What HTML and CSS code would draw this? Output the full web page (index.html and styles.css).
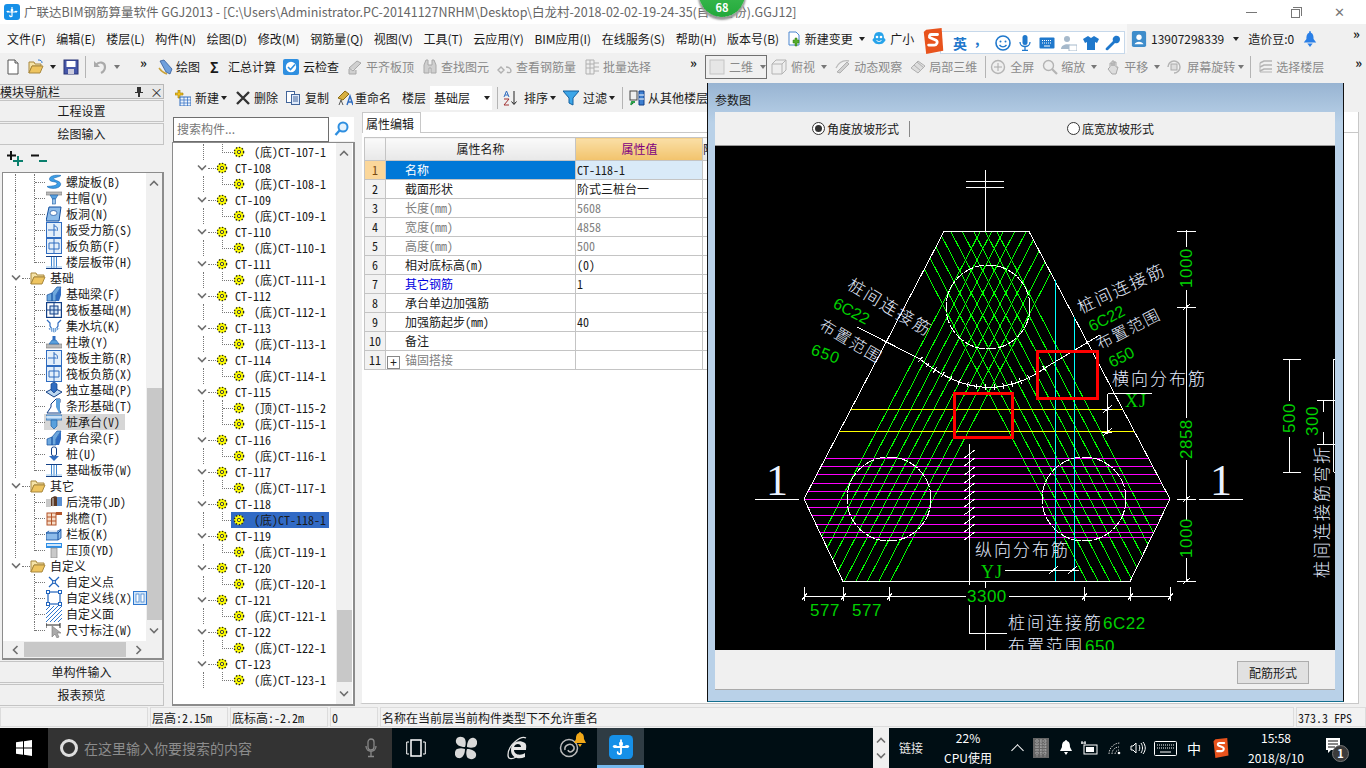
FILE: index.html
```html
<!DOCTYPE html>
<html lang="zh-CN">
<head>
<meta charset="utf-8">
<title>广联达BIM钢筋算量软件 GGJ2013</title>
<link rel="stylesheet" href="styles.css">
</head>
<body>
<svg class="defs" width="0" height="0">
<defs>
<symbol id="arr" viewBox="0 0 8 4"><path d="M1 0h6L4 4z" fill="#222"/></symbol>
<symbol id="arrg" viewBox="0 0 8 4"><path d="M1 0h6L4 4z" fill="#777"/></symbol>
<symbol id="chev" viewBox="0 0 10 8"><path d="M1 1.5l4 4 4-4" fill="none" stroke="#6e6e6e" stroke-width="1.6"/></symbol>
<symbol id="gear" viewBox="0 0 12 12"><circle cx="6" cy="6" r="5" fill="#ff0"/><circle cx="6" cy="6" r="4.6" fill="none" stroke="#222" stroke-width="1.4" stroke-dasharray="1.4 1.6"/><circle cx="6" cy="6" r="1.7" fill="none" stroke="#444"/></symbol>
<symbol id="folder" viewBox="0 0 16 14"><path d="M1 2h5l1 2h7v2H4L1 13z" fill="#f5e3a8" stroke="#a8873c"/><path d="M1 13l3-7h11l-3 7z" fill="#eec45f" stroke="#a8873c"/></symbol>
<symbol id="spiral" viewBox="0 0 16 16"><path d="M15 1.5C9 .5 3 2 3.500 5.500 4 8.500 11 7 11 9.500 11 12 5 12 1 12.500 3 15 13 15.500 14.500 11 16 7 8 6.500 7.500 5 7 3.500 12 3.500 15 1.500z" fill="#3b9ee6" stroke="#1564b0" stroke-width=".6"/></symbol>
<symbol id="cap" viewBox="0 0 16 16"><rect y="2" width="16" height="3" fill="#bbb" stroke="#777" stroke-width=".6"/><path d="M4 5h8L9.500 9h-3z" fill="#5aa0dc" stroke="#1b5ea8" stroke-width=".6"/><rect x="6.500" y="9" width="3" height="5" fill="#9cc6ec" stroke="#1b5ea8" stroke-width=".6"/></symbol>
<symbol id="hole" viewBox="0 0 16 16"><path d="M3 1h12l-2 14H0z" fill="#8dbcea" stroke="#134f9e"/><ellipse cx="7.500" cy="7" rx="3.500" ry="2.500" fill="#fff" stroke="#134f9e" stroke-width=".7"/></symbol>
<symbol id="rebar" viewBox="0 0 16 16"><rect x=".5" y=".5" width="15" height="15" fill="#e4effa" stroke="#2f6cc0"/><path d="M8 2v12M2 8h8M8 4c3 0 4 2 3 5" fill="none" stroke="#2f6cc0"/></symbol>
<symbol id="neg" viewBox="0 0 16 16"><rect x=".5" y=".5" width="15" height="15" fill="#e4effa" stroke="#2f6cc0"/><path d="M8 1v14M3 5h10v6H3z" fill="none" stroke="#2f6cc0"/></symbol>
<symbol id="band" viewBox="0 0 16 16"><path d="M0 2.500h16M0 14.500h16" stroke="#123f86" fill="none"/><path d="M5.500 3v11M10.500 3v11M8 3v11" stroke="#3f86d0" fill="none"/><path d="M0 13h16" stroke="#9cc6ec"/></symbol>
<symbol id="fbeam" viewBox="0 0 16 16"><path d="M1 15V9l5-2v8zM6 7l5-6h4l-5 8v6H6z" fill="#6ea8de" stroke="#134f9e" stroke-width=".7"/><path d="M10 15V9l5-8v8l-2 6z" fill="#2f6cc0"/></symbol>
<symbol id="raft" viewBox="0 0 16 16"><rect x=".5" y=".5" width="15" height="15" fill="none" stroke="#123f86" stroke-width="1.4"/><rect x="4" y="4" width="8" height="8" fill="#cfe2f6" stroke="#123f86"/><path d="M8 0v16M0 8h16" stroke="#123f86"/></symbol>
<symbol id="pit" viewBox="0 0 16 16"><path d="M1 2l3 3v3l2 3h4l2-3V5l3-3" fill="none" stroke="#2f6cc0" stroke-width="1.200"/><path d="M2 10l6 5 6-5z" fill="#bcd7f0"/><path d="M3 11h10M5 13h6" stroke="#2f6cc0" stroke-dasharray="1 1"/></symbol>
<symbol id="pier" viewBox="0 0 16 16"><rect y="10" width="16" height="4" fill="#bbb" stroke="#777" stroke-width=".6"/><path d="M3 10l3-4h4l3 4z" fill="#5aa0dc" stroke="#1b5ea8" stroke-width=".6"/><rect x="6.500" y="2" width="3" height="4" fill="#2f6cc0"/></symbol>
<symbol id="iso" viewBox="0 0 16 16"><path d="M0 10l8-4 8 4-8 5z" fill="#bcd7f0" stroke="#123f86"/><path d="M5 8V2l3-2 3 2v6l-3 3z" fill="#2f6cc0" stroke="#123f86" stroke-width=".7"/></symbol>
<symbol id="stripf" viewBox="0 0 16 16"><path d="M1 15l4-6V6l5-5h4v3l-2 5 3 6z" fill="#fff" stroke="#123f86"/><path d="M10 1h4v14h-1l-3-6z" fill="#5aa0dc"/></symbol>
<symbol id="pcap" viewBox="0 0 16 16"><path d="M0 1h16v5H0z" fill="#9cc6ec" stroke="#1b5ea8" stroke-width=".7"/><path d="M5 6h6v6l-3 3-3-3z" fill="#5aa0dc" stroke="#1b5ea8" stroke-width=".7"/><path d="M0 3h16" stroke="#fff"/></symbol>
<symbol id="pile" viewBox="0 0 16 16"><rect x="5.500" y="1" width="5" height="9" rx="2" fill="#fff" stroke="#123f86"/><path d="M3 10h10l-5 5z" fill="#2f6cc0"/></symbol>
<symbol id="post" viewBox="0 0 16 16"><rect y="5" width="5" height="8" fill="#c9c9c9"/><rect x="11" y="3" width="5" height="9" fill="#5b8fd0"/><path d="M5 4c3-2 5-2 6-1v9H5z" fill="#5a3824"/><path d="M7 4v9" stroke="#ddd"/></symbol>
<symbol id="eave" viewBox="0 0 16 16"><rect x="1" y="3" width="9" height="12" fill="#f6dcc7" stroke="#b3552a"/><path d="M1 7h9M1 11h9M5.500 3v12" stroke="#b3552a"/><path d="M10 2h6v3h-6z" fill="#b3552a"/></symbol>
<symbol id="rail" viewBox="0 0 16 16"><path d="M0 7l3-2h9l3-2v9l-3 2H0z" fill="#8dbcea" stroke="#134f9e" stroke-width=".8"/><path d="M0 7h12v7M12 7l3-3" fill="none" stroke="#134f9e"/><path d="M3 5h8" stroke="#fff" stroke-width="1.500"/></symbol>
<symbol id="ptop" viewBox="0 0 16 16"><rect y="1" width="16" height="5" fill="#2f8fe6"/><rect x="1" y="2" width="14" height="2" fill="#cfe6fb"/><rect x="5" y="6" width="6" height="10" fill="#c9c9c9" stroke="#888" stroke-width=".7"/></symbol>
<symbol id="cpt" viewBox="0 0 16 16"><path d="M3 3l10 10M13 3L3 13" stroke="#1f63bd" stroke-width="1.300"/><circle cx="8" cy="8" r="1.500" fill="#fff" stroke="#1f63bd"/></symbol>
<symbol id="cline" viewBox="0 0 16 16"><rect x="2" y="2" width="12" height="12" fill="#fff" stroke="#1f63bd" stroke-width="1.200"/><path d="M0 0h4v4H0zM12 0h4v4h-4zM0 12h4v4H0zM12 12h4v4h-4z" fill="#1f63bd"/><path d="M1 1h2v2H1zM13 1h2v2h-2zM1 13h2v2H1zM13 13h2v2h-2z" fill="#fff"/></symbol>
<symbol id="cface" viewBox="0 0 16 16"><path d="M0 4l4-4M0 8l8-8M0 12L12 0M0 16L16 0M4 16L16 4M8 16l8-8M12 16l4-4" stroke="#2f78cf"/></symbol>
<symbol id="cdim" viewBox="0 0 16 16"><path d="M0 1v5M14 1v5M0 3h14" stroke="#222"/><path d="M6 4v11l3-3 2 4 2-1-2-4h4z" fill="#aaa" stroke="#777" stroke-width=".6"/></symbol>
<symbol id="colm" viewBox="0 0 14 14"><rect x=".5" y=".5" width="13" height="13" fill="#d3e6f8" stroke="#2f78cf"/><rect x="3" y="3" width="3" height="8" fill="#fff" stroke="#2f78cf" stroke-width=".7"/><rect x="8" y="3" width="3" height="8" fill="#fff" stroke="#2f78cf" stroke-width=".7"/></symbol>
<symbol id="file" viewBox="0 0 16 16"><path d="M3 1h7l3 3v11H3z" fill="#fff" stroke="#555"/><path d="M10 1v3h3" fill="#ddd" stroke="#555"/></symbol>
<symbol id="open" viewBox="0 0 16 16"><path d="M1 3h5l1 2h6v2H4l-3 7z" fill="#f5e3a8" stroke="#a8873c"/><path d="M1 14l3-7h11l-3 7z" fill="#eec45f" stroke="#a8873c"/><path d="M10 1c3 0 4 1 4 3" stroke="#2f78cf" fill="none"/></symbol>
<symbol id="save" viewBox="0 0 16 16"><rect x="1" y="1" width="14" height="14" fill="#4556a8" stroke="#2a3476"/><rect x="3.500" y="2" width="9" height="6" fill="#fff"/><rect x="5" y="10" width="6" height="5" fill="#ccd"/></symbol>
<symbol id="undo" viewBox="0 0 16 16"><path d="M3 6c3-4 9-3 9 2 0 3-2 5-4 6" fill="none" stroke="#aaa" stroke-width="2.200"/><path d="M1 2v6h6z" fill="#aaa"/></symbol>
<symbol id="draw" viewBox="0 0 16 16"><path d="M2 2l4-1 8 9-2 5-4-2z" fill="#6f9fdc" stroke="#244f92" stroke-width=".7"/><path d="M1 9c2 3 5 5 8 6" fill="none" stroke="#c9a23a" stroke-width="1.400"/></symbol>
<symbol id="cloud" viewBox="0 0 16 16"><rect width="16" height="16" rx="2" fill="#2f8fe0"/><circle cx="8" cy="8" r="5.200" fill="#fff"/><path d="M5 8l2.500 2.500L12 5.500" fill="none" stroke="#2f8fe0" stroke-width="1.600"/></symbol>
<symbol id="gray1" viewBox="0 0 16 16"><path d="M2 9l8-7 4 2-8 8zM2 10v5h7v-4" fill="#d0d0d0" stroke="#a8a8a8"/></symbol>
<symbol id="bino" viewBox="0 0 16 16"><path d="M2 6l2-5h2v5h4V1h2l2 5v8H9V9H7v5H2z" fill="#cfcfcf" stroke="#a8a8a8"/></symbol>
<symbol id="rbq" viewBox="0 0 16 16"><path d="M1 11l3-3 3 3-3 3zM9 8c3 0 5 2 5 4s-3 2-4 1" fill="none" stroke="#b0b0b0" stroke-width="1.400"/></symbol>
<symbol id="batch" viewBox="0 0 16 16"><path d="M2 1h8v14H2zM2 5h8M2 9h8M6 1v14" fill="#eee" stroke="#b0b0b0"/><path d="M10 4h5M10 8h5M10 12h5" stroke="#b0b0b0"/></symbol>
<symbol id="twod" viewBox="0 0 16 16"><rect x="1" y="1" width="14" height="14" fill="#e6e6e6" stroke="#c4c4c4"/></symbol>
<symbol id="cube" viewBox="0 0 16 16"><path d="M1 5l4-4h10v10l-4 4H1zM1 5h10v10M11 5l4-4" fill="#eee" stroke="#b4b4b4"/></symbol>
<symbol id="orbit" viewBox="0 0 16 16"><path d="M2 13L12 3l2 2L5 14z" fill="#d0d0d0" stroke="#b0b0b0"/><path d="M1 9c3-6 8-8 13-7" fill="none" stroke="#bbb" stroke-width="1.300"/></symbol>
<symbol id="local" viewBox="0 0 16 16"><path d="M1 9l7-7 7 5-7 7z" fill="#ddd" stroke="#b0b0b0"/><path d="M4 6l7 6M7 3l7 6" stroke="#b0b0b0"/></symbol>
<symbol id="full" viewBox="0 0 16 16"><circle cx="8" cy="8" r="6.500" fill="#efefef" stroke="#b4b4b4" stroke-width="1.400"/><path d="M8 4v8M4 8h8" stroke="#aaa"/></symbol>
<symbol id="zoomi" viewBox="0 0 16 16"><circle cx="6.500" cy="6.500" r="5" fill="#eee" stroke="#b4b4b4" stroke-width="1.400"/><path d="M10 10l5 5" stroke="#b4b4b4" stroke-width="2.200"/></symbol>
<symbol id="pan" viewBox="0 0 16 16"><path d="M4 8V4h2v3V2h2v5V3h2v5h2l-2 7H6L2 10z" fill="#ddd" stroke="#aaa"/></symbol>
<symbol id="rot" viewBox="0 0 16 16"><path d="M2 8a6 6 0 1 1 6 6" fill="none" stroke="#b4b4b4" stroke-width="1.500"/><rect x="5" y="5" width="6" height="6" fill="#ddd" stroke="#aaa"/></symbol>
<symbol id="floors" viewBox="0 0 16 16"><path d="M2 4l4-2h8M2 8l4-2h8M2 12l4-2h8" fill="none" stroke="#b4b4b4" stroke-width="1.500"/><path d="M2 4v9h12" fill="none" stroke="#b4b4b4"/></symbol>
<symbol id="newc" viewBox="0 0 16 16"><path d="M0 3h3V0h2v3h3v2H5v3H3V5H0z" fill="#f0c020" stroke="#a07a00" stroke-width=".6"/><rect x="5" y="7" width="11" height="9" fill="#eaf2fb" stroke="#2f6cc0"/><path d="M5 10h11M5 13h11M9 7v9M12.500 7v9" stroke="#2f6cc0" stroke-width=".7"/></symbol>
<symbol id="del" viewBox="0 0 16 16"><path d="M2 2l12 12M14 2L2 14" stroke="#333" stroke-width="2.400"/></symbol>
<symbol id="copy" viewBox="0 0 16 16"><rect x="1.500" y="1.500" width="8" height="11" fill="#fff" stroke="#42659a"/><rect x="6.500" y="4.500" width="8" height="10" fill="#dfeafa" stroke="#42659a"/><path d="M8 7h5M8 9h5M8 11h5" stroke="#42659a"/></symbol>
<symbol id="rename" viewBox="0 0 16 16"><path d="M1 8l7-7 4 3-6 6z" fill="#d8b040" stroke="#8a6a12"/><path d="M10 15l3-9 3 9M11 12h4" fill="none" stroke="#2f6cc0" stroke-width="1.400"/><path d="M2 15l2-5 2 5" fill="none" stroke="#555"/></symbol>
<symbol id="sort" viewBox="0 0 16 16"><path d="M1 7l2.500-6L6 7M2 5h3" fill="none" stroke="#2f6cc0"/><path d="M1 9h5L1 15h5" fill="none" stroke="#a03030"/><path d="M11 1v13M8.500 11.500l2.500 3 2.500-3" fill="none" stroke="#222"/></symbol>
<symbol id="filter" viewBox="0 0 16 16"><path d="M0 1h16l-6 7v7l-4-2V8z" fill="#3da6e8" stroke="#14619f"/></symbol>
<symbol id="other" viewBox="0 0 16 16"><rect x="1" y="1" width="7" height="9" fill="#eee" stroke="#444"/><path d="M2 15l1-3h3" stroke="#2aa04a" stroke-width="2"/><path d="M10 1h5v14h-5z" fill="#3d7fd0" stroke="#123f86"/><path d="M10 5h5M10 9h5" stroke="#fff"/></symbol>
<symbol id="mag" viewBox="0 0 16 16"><circle cx="9" cy="6" r="4.500" fill="#e4f2fd" stroke="#2f8fe0" stroke-width="2"/><path d="M5.500 9.500L1.500 14" stroke="#2f8fe0" stroke-width="2.400"/></symbol>
<symbol id="plus2" viewBox="0 0 17 16"><path d="M4 0v9M0 4.500h9" stroke="#111" stroke-width="2"/><path d="M11 5v10M6 10h10" stroke="#0a7f6d" stroke-width="2"/></symbol>
<symbol id="minus2" viewBox="0 0 17 16"><path d="M0 4.500h8" stroke="#111" stroke-width="2"/><path d="M8 10h8" stroke="#0a7f6d" stroke-width="2"/></symbol>
<symbol id="pin" viewBox="0 0 10 12"><path d="M3 1h4v5h2v1H6v4H4V7H1V6h2z" fill="#333"/></symbol>
<symbol id="logo" viewBox="0 0 16 16"><rect width="16" height="16" rx="3" fill="#1690e8"/><path d="M8 3v4M8 7c-1 0-1-2 0-2s1 2 0 2zM3 8h10M3 8c0-1 2-1 2 0M13 8c0-1-2-1-2 0M8 8v4c0 1-3 1-2-1" fill="none" stroke="#fff" stroke-width="1.200"/></symbol>
<symbol id="logo2" viewBox="0 0 16 16"><path d="M3 1h7l3 3v10H3z" fill="#fff" stroke="#4a86d0"/><path d="M9 15V12H7V9h2V7h2v2h2v3h-2v3z" fill="#55ad2e" stroke="#2c7a10" stroke-width=".5"/></symbol>
<symbol id="penguin" viewBox="0 0 16 16"><path d="M8 1c4 0 5 3 5 6 2 1 2 3 0 4-1 3-9 3-10 0-2-1-2-3 0-4 0-3 1-6 5-6z" fill="#27a3ea"/><circle cx="6" cy="6" r="1.300" fill="#fff"/><circle cx="10" cy="6" r="1.300" fill="#fff"/><path d="M5.500 9c1 2 4 2 5 0" fill="none" stroke="#fff"/></symbol>
<symbol id="acct" viewBox="0 0 16 18"><rect width="16" height="18" rx="2" fill="#3f8dcb"/><circle cx="8" cy="7" r="3" fill="#fff"/><path d="M3 15c1-4 9-4 10 0z" fill="#fff"/></symbol>
<symbol id="bell" viewBox="0 0 16 18"><path d="M8 0c1 0 1 1 1 2 3 1 3 5 3 7l3 4H1l3-4c0-2 0-6 3-7 0-1 0-2 1-2z" fill="#2a7fe6"/><path d="M5 14h6l-3 4z" fill="#2a7fe6"/></symbol>
<symbol id="sogou" viewBox="0 0 24 32"><path d="M3 2l19-2 2 28-21 4-3-27z" fill="#e8531d"/><path d="M17 8H9c-2 0-3 3-1 4l7 3c3 2 1 6-2 6H6" fill="none" stroke="#fff" stroke-width="3.400" stroke-linecap="round"/></symbol>
<symbol id="smile" viewBox="0 0 16 16"><circle cx="8" cy="8" r="7" fill="#fff" stroke="#1f78cc" stroke-width="1.600"/><circle cx="5.500" cy="6.500" r="1" fill="#1f78cc"/><circle cx="10.500" cy="6.500" r="1" fill="#1f78cc"/><path d="M4.500 10c2 2.500 5 2.500 7 0" fill="none" stroke="#1f78cc" stroke-width="1.300"/></symbol>
<symbol id="mic" viewBox="0 0 16 16"><rect x="5.500" y="0" width="5" height="10" rx="2.500" fill="#1f78cc"/><path d="M3 7c0 6 10 6 10 0M8 12v3M5 15.500h6" fill="none" stroke="#1f78cc" stroke-width="1.300"/></symbol>
<symbol id="kbd" viewBox="0 0 16 16"><rect x=".5" y="2.500" width="15" height="11" rx="1" fill="#1f78cc"/><path d="M3 5.500h10M3 8h10" stroke="#fff" stroke-dasharray="1 1"/><path d="M5 11h6" stroke="#fff"/></symbol>
<symbol id="usr" viewBox="0 0 16 16"><circle cx="6" cy="4" r="3" fill="#a6b9cb"/><path d="M0 14c0-6 11-6 11-2v2z" fill="#a6b9cb"/><rect x="8" y="10" width="8" height="6" fill="#fff" stroke="#a6b9cb"/></symbol>
<symbol id="shirt" viewBox="0 0 16 16"><path d="M5 1l3 2 3-2 5 3-2 4-2-1v8H4V7L2 8 0 4z" fill="#1f78cc"/></symbol>
<symbol id="wrench" viewBox="0 0 16 16"><path d="M10 1c3-1 5 1 5 3l-3 1-1-2zM15 4c0 3-2 5-5 4L3 15c-2 1-3-1-2-2l7-7c-1-3 1-5 3-5" fill="#1f78cc"/></symbol>
<symbol id="win" viewBox="0 0 16 16"><path d="M0 2.300l7-1v6.200H0zM8 1.200L16 0v7.500H8zM0 8.500h7v6.200l-7-1zM8 8.500h8V16l-8-1.200z" fill="#fff"/></symbol>
<symbol id="mict" viewBox="0 0 16 20"><rect x="5" y="1" width="6" height="11" rx="3" fill="none" stroke="#888" stroke-width="1.300"/><path d="M3 8c0 7 10 7 10 0M8 14v4M5 18.500h6" fill="none" stroke="#888" stroke-width="1.300"/></symbol>
<symbol id="tview" viewBox="0 0 20 18"><rect x="5" y="1" width="10" height="16" fill="none" stroke="#fff" stroke-width="1.500"/><path d="M3 3H.7v12H3M17 3h2.300v12H17" fill="none" stroke="#fff"/></symbol>
<symbol id="fan" viewBox="0 0 22 24"><path d="M10 11C4 11 0 8 1 4c1-4 7-4 9-1 1 3 1 5 0 8zM12 11c0-6 3-10 7-9 4 1 4 7 1 9-3 1-5 1-8 0zM12 13c6 0 10 3 9 7-1 4-7 4-9 1-1-3-1-5 0-8zM10 13c0 6-3 10-7 9-4-1-4-7-1-9 3-1 5-1 8 0z" fill="#d9d9d9"/></symbol>
<symbol id="ie" viewBox="0 0 22 24"><path d="M19 14H7c0 5 7 6 11 3v4c-6 3-14 1-14-7 0-8 8-11 14-7 2 2 1 5 1 7zM7 11h7c0-4-6-4-7 0z" fill="#e6e6e6"/><path d="M19 2C14-1 1 9 1 19c0 5 5 4 8 2" fill="none" stroke="#e6e6e6" stroke-width="1.300"/></symbol>
<symbol id="swirl" viewBox="0 0 22 22"><circle cx="10" cy="11" r="8.500" fill="none" stroke="#bbb" stroke-width="1.500"/><path d="M6 13c-1-5 6-8 9-3 1 4-5 7-6 3" fill="none" stroke="#bbb" stroke-width="1.500"/></symbol>
<symbol id="bellg" viewBox="0 0 14 16"><path d="M7 0c1 0 1 1 1 1 3 1 3 4 3 6l2 4H1l2-4c0-2 0-5 3-6 0 0 0-1 1-1z" fill="#f0a818"/><path d="M5 12h4l-2 3z" fill="#f0a818"/></symbol>
<symbol id="tbell" viewBox="0 0 14 16"><path d="M7 0c1 0 1 1 1 1 3 1 3 4 3 6l2 4H1l2-4c0-2 0-5 3-6 0 0 0-1 1-1z" fill="#fff"/><path d="M5 12h4l-2 3z" fill="#fff"/></symbol>
<symbol id="batt" viewBox="0 0 18 14"><rect x="3" y="4" width="13" height="9" fill="none" stroke="#fff"/><rect x="5" y="6" width="8" height="5" fill="#fff"/><path d="M0 2h5M1 0v3M4 0v3" stroke="#fff"/></symbol>
<symbol id="wifi" viewBox="0 0 16 14"><path d="M1 13C1 7 6 2 12 2M4 13c0-4 3-7 7-7M7 13c0-2 2-4 4-4" fill="none" stroke="#ccc" stroke-dasharray="1.500 1"/><circle cx="11" cy="12" r="1.300" fill="#fff"/></symbol>
<symbol id="vol" viewBox="0 0 16 14"><path d="M1 5h2l3-3v10L3 9H1z" fill="none" stroke="#fff"/><path d="M9 4c1 2 1 4 0 6M11 2c2 3 2 7 0 10M13 1c3 4 3 8 0 12" fill="none" stroke="#fff"/></symbol>
<symbol id="tkbd" viewBox="0 0 23 15"><rect x=".5" y=".5" width="22" height="14" rx="1" fill="none" stroke="#fff"/><path d="M3 4h17M3 7h17" stroke="#fff" stroke-dasharray="1 1"/><path d="M6 11h11" stroke="#fff"/></symbol>
<symbol id="ime" viewBox="0 0 16 20"><rect width="16" height="20" fill="#666"/><path d="M2 3h12M2 6h12M2 9h12M2 12h12M2 15h12M4 1v18M8 1v18M12 1v18" stroke="#ccc" stroke-width=".7" stroke-dasharray="1.500 1"/></symbol>
<symbol id="note" viewBox="0 0 16 18"><path d="M1 1h14v12H6l-3 3v-3H1z" fill="#fff"/><path d="M3 4h10M3 7h10M3 10h7" stroke="#111"/></symbol>
</defs>
</svg>

<header class="titlebar">
  <svg class="ico ico-logo"><use href="#logo"/></svg>
  <span class="title-text">广联达BIM钢筋算量软件 GGJ2013 - [C:\Users\Administrator.PC-20141127NRHM\Desktop\白龙村-2018-02-02-19-24-35(自动备份).GGJ12]</span>
  <span class="winbtn win-min"></span>
  <span class="winbtn win-max"></span>
  <span class="winbtn win-close">✕</span>
</header>

<nav class="menubar">
  <span class="mi">文件(F)</span><span class="mi">编辑(E)</span><span class="mi">楼层(L)</span><span class="mi">构件(N)</span><span class="mi">绘图(D)</span><span class="mi">修改(M)</span><span class="mi">钢筋量(Q)</span><span class="mi">视图(V)</span><span class="mi">工具(T)</span><span class="mi">云应用(Y)</span><span class="mi">BIM应用(I)</span><span class="mi">在线服务(S)</span><span class="mi">帮助(H)</span><span class="mi">版本号(B)</span>
  <span class="mi mi-ico mi-new"><svg class="ico"><use href="#logo2"/></svg>新建变更<svg class="ar"><use href="#arr"/></svg></span>
  <span class="mi mi-ico mi-gx"><svg class="ico"><use href="#penguin"/></svg>广小</span>
  <span class="acct"><svg class="ico"><use href="#acct"/></svg><span class="phone">13907298339</span><svg class="ar m8"><use href="#arr"/></svg><span class="m8">造价豆:0</span><svg class="ico m8"><use href="#bell"/></svg><span class="chevs chevs-a">»</span></span>
</nav>

<div class="sogou">
  <svg class="sg-logo"><use href="#sogou"/></svg>
  <div class="sg-bar">
    <b class="sg-en">英</b><b class="sg-dot">,</b>
    <svg class="ico sg-i"><use href="#smile"/></svg><svg class="ico sg-i"><use href="#mic"/></svg><svg class="ico sg-i"><use href="#kbd"/></svg><svg class="ico sg-i"><use href="#usr"/></svg><svg class="ico sg-i"><use href="#shirt"/></svg><svg class="ico sg-i"><use href="#wrench"/></svg>
  </div>
</div>

<div class="badge68"><span>68</span></div>

<div class="toolbar">
  <svg class="ico m5"><use href="#file"/></svg>
  <svg class="ico m7"><use href="#open"/></svg><svg class="ar m5"><use href="#arr"/></svg>
  <svg class="ico m6"><use href="#save"/></svg><span class="sep m6"></span>
  <svg class="ico m7"><use href="#undo"/></svg><svg class="ar m4"><use href="#arrg"/></svg>
  <span class="chevs m19">»</span>
  <svg class="ico m8"><use href="#draw"/></svg><span class="m2">绘图</span>
  <b class="sigma m10">Σ</b><span class="m6">汇总计算</span>
  <svg class="ico m7"><use href="#cloud"/></svg><span class="m4">云检查</span>
  <svg class="ico m8"><use href="#gray1"/></svg><span class="m3 dim">平齐板顶</span>
  <svg class="ico m8"><use href="#bino"/></svg><span class="m3 dim">查找图元</span>
  <svg class="ico m8"><use href="#rbq"/></svg><span class="m3 dim">查看钢筋量</span>
  <svg class="ico m8"><use href="#batch"/></svg><span class="m3 dim">批量选择</span>
  <span class="chevs m39">»</span>
  <span class="combo2d m5"><svg class="ico"><use href="#twod"/></svg><span class="dim m4">二维</span><svg class="ar m10"><use href="#arrg"/></svg></span>
  <svg class="ico m4"><use href="#cube"/></svg><span class="m4 dim">俯视</span><svg class="ar m5"><use href="#arrg"/></svg>
  <svg class="ico m7"><use href="#orbit"/></svg><span class="m3 dim">动态观察</span>
  <svg class="ico m8"><use href="#local"/></svg><span class="m3 dim">局部三维</span>
  <span class="sep m8"></span>
  <svg class="ico m4"><use href="#full"/></svg><span class="m4 dim">全屏</span>
  <svg class="ico m8"><use href="#zoomi"/></svg><span class="m3 dim">缩放</span><svg class="ar m5"><use href="#arrg"/></svg>
  <svg class="ico m8"><use href="#pan"/></svg><span class="m2 dim">平移</span><svg class="ar m5"><use href="#arrg"/></svg>
  <svg class="ico m5"><use href="#rot"/></svg><span class="m5 dim">屏幕旋转</span><svg class="ar m2"><use href="#arrg"/></svg>
  <span class="sep m5"></span>
  <svg class="ico m7"><use href="#floors"/></svg><span class="m2 dim">选择楼层</span>
  <span class="chevs m31">»</span>
</div>

<main class="workspace">
  <aside class="nav">
    <div class="nav-head"><span class="nav-t">模块导航栏</span><svg class="pin"><use href="#pin"/></svg><span class="nav-x">×</span></div>
    <button class="navbtn">工程设置</button>
    <button class="navbtn">绘图输入</button>
    <div class="nav-tools"><svg class="tool17"><use href="#plus2"/></svg><svg class="tool17"><use href="#minus2"/></svg></div>
    <div class="nav-tree">
      <div class="nav-scroll-area">
        <div class="nav-list">
          <div class="leaf"><i class="rail"></i><i class="twig"></i><svg class="ico"><use href="#spiral"/></svg><span class="lbl">螺旋板(B)</span></div>
          <div class="leaf"><i class="rail"></i><i class="twig"></i><svg class="ico"><use href="#cap"/></svg><span class="lbl">柱帽(V)</span></div>
          <div class="leaf"><i class="rail"></i><i class="twig"></i><svg class="ico"><use href="#hole"/></svg><span class="lbl">板洞(N)</span></div>
          <div class="leaf"><i class="rail"></i><i class="twig"></i><svg class="ico"><use href="#rebar"/></svg><span class="lbl">板受力筋(S)</span></div>
          <div class="leaf"><i class="rail"></i><i class="twig"></i><svg class="ico"><use href="#neg"/></svg><span class="lbl">板负筋(F)</span></div>
          <div class="leaf"><i class="rail"></i><i class="twig tw-last"></i><svg class="ico"><use href="#band"/></svg><span class="lbl">楼层板带(H)</span></div>
          <div class="grp"><svg class="chev"><use href="#chev"/></svg><i class="hdots"></i><svg class="ico"><use href="#folder"/></svg><span class="grp-l">基础</span></div>
          <div class="leaf"><i class="rail"></i><i class="twig"></i><svg class="ico"><use href="#fbeam"/></svg><span class="lbl">基础梁(F)</span></div>
          <div class="leaf"><i class="rail"></i><i class="twig"></i><svg class="ico"><use href="#raft"/></svg><span class="lbl">筏板基础(M)</span></div>
          <div class="leaf"><i class="rail"></i><i class="twig"></i><svg class="ico"><use href="#pit"/></svg><span class="lbl">集水坑(K)</span></div>
          <div class="leaf"><i class="rail"></i><i class="twig"></i><svg class="ico"><use href="#pier"/></svg><span class="lbl">柱墩(Y)</span></div>
          <div class="leaf"><i class="rail"></i><i class="twig"></i><svg class="ico"><use href="#rebar"/></svg><span class="lbl">筏板主筋(R)</span></div>
          <div class="leaf"><i class="rail"></i><i class="twig"></i><svg class="ico"><use href="#neg"/></svg><span class="lbl">筏板负筋(X)</span></div>
          <div class="leaf"><i class="rail"></i><i class="twig"></i><svg class="ico"><use href="#iso"/></svg><span class="lbl">独立基础(P)</span></div>
          <div class="leaf"><i class="rail"></i><i class="twig"></i><svg class="ico"><use href="#stripf"/></svg><span class="lbl">条形基础(T)</span></div>
          <div class="leaf leaf-sel"><i class="rail"></i><i class="twig"></i><svg class="ico"><use href="#pcap"/></svg><span class="lbl">桩承台(V)</span></div>
          <div class="leaf"><i class="rail"></i><i class="twig"></i><svg class="ico"><use href="#fbeam"/></svg><span class="lbl">承台梁(F)</span></div>
          <div class="leaf"><i class="rail"></i><i class="twig"></i><svg class="ico"><use href="#pile"/></svg><span class="lbl">桩(U)</span></div>
          <div class="leaf"><i class="rail"></i><i class="twig tw-last"></i><svg class="ico"><use href="#band"/></svg><span class="lbl">基础板带(W)</span></div>
          <div class="grp"><svg class="chev"><use href="#chev"/></svg><i class="hdots"></i><svg class="ico"><use href="#folder"/></svg><span class="grp-l">其它</span></div>
          <div class="leaf"><i class="rail"></i><i class="twig"></i><svg class="ico"><use href="#post"/></svg><span class="lbl">后浇带(JD)</span></div>
          <div class="leaf"><i class="rail"></i><i class="twig"></i><svg class="ico"><use href="#eave"/></svg><span class="lbl">挑檐(T)</span></div>
          <div class="leaf"><i class="rail"></i><i class="twig"></i><svg class="ico"><use href="#rail"/></svg><span class="lbl">栏板(K)</span></div>
          <div class="leaf"><i class="rail"></i><i class="twig tw-last"></i><svg class="ico"><use href="#ptop"/></svg><span class="lbl">压顶(YD)</span></div>
          <div class="grp"><svg class="chev"><use href="#chev"/></svg><i class="hdots"></i><svg class="ico"><use href="#folder"/></svg><span class="grp-l">自定义</span></div>
          <div class="leaf"><i class="rail rail-none"></i><i class="twig"></i><svg class="ico"><use href="#cpt"/></svg><span class="lbl">自定义点</span></div>
          <div class="leaf"><i class="rail rail-none"></i><i class="twig"></i><svg class="ico"><use href="#cline"/></svg><span class="lbl">自定义线(X)</span><svg class="colm"><use href="#colm"/></svg></div>
          <div class="leaf"><i class="rail rail-none"></i><i class="twig"></i><svg class="ico"><use href="#cface"/></svg><span class="lbl">自定义面</span></div>
          <div class="leaf"><i class="rail rail-none"></i><i class="twig tw-last"></i><svg class="ico"><use href="#cdim"/></svg><span class="lbl">尺寸标注(W)</span></div>
        </div>
        <div class="vscroll vs-nav"><svg class="sb-up"><use href="#chev"/></svg><span class="vs-space vs-nav-space"></span><span class="thumb vs-nav-thumb"></span><svg class="sb-dn"><use href="#chev"/></svg></div>
      </div>
      <div class="hscroll"><svg class="sb-l"><use href="#chev"/></svg><span class="hthumb"></span><svg class="sb-r"><use href="#chev"/></svg></div>
    </div>
    <button class="navbtn navbtn-b">单构件输入</button>
    <button class="navbtn">报表预览</button>
  </aside>

  <section class="center">
    <div class="toolbar2">
      <svg class="ico m5"><use href="#newc"/></svg><span class="m4">新建</span><svg class="ar m1"><use href="#arr"/></svg>
      <svg class="ico m7"><use href="#del"/></svg><span class="m3">删除</span>
      <svg class="ico m7"><use href="#copy"/></svg><span class="m4">复制</span>
      <svg class="ico m8"><use href="#rename"/></svg><span class="m2">重命名</span>
      <span class="m11">楼层</span>
      <span class="floorbox m4">基础层<svg class="ar"><use href="#arr"/></svg></span>
      <span class="sep m5"></span>
      <svg class="ico m5"><use href="#sort"/></svg><span class="m5">排序</span><svg class="ar m1"><use href="#arr"/></svg>
      <svg class="ico m6"><use href="#filter"/></svg><span class="m4">过滤</span><svg class="ar m1"><use href="#arr"/></svg>
      <span class="sep m6"></span>
      <svg class="ico m6"><use href="#other"/></svg><span class="m3 nowrap">从其他楼层</span>
    </div>
    <div class="center-body">
      <div class="comp">
        <div class="search"><span class="search-input">搜索构件...</span><span class="search-btn"><svg class="ico"><use href="#mag"/></svg></span></div>
        <div class="comp-box">
          <div class="comp-list">
            <div class="child"><i class="rail2"></i><i class="twig2"></i><svg class="gear"><use href="#gear"/></svg><span class="clbl">(底)CT-107-1</span></div>
            <div class="ct"><svg class="chev"><use href="#chev"/></svg><i class="hdots"></i><svg class="gear"><use href="#gear"/></svg><span class="gl">CT-108</span></div>
            <div class="child"><i class="rail2"></i><i class="twig2"></i><svg class="gear"><use href="#gear"/></svg><span class="clbl">(底)CT-108-1</span></div>
            <div class="ct"><svg class="chev"><use href="#chev"/></svg><i class="hdots"></i><svg class="gear"><use href="#gear"/></svg><span class="gl">CT-109</span></div>
            <div class="child"><i class="rail2"></i><i class="twig2"></i><svg class="gear"><use href="#gear"/></svg><span class="clbl">(底)CT-109-1</span></div>
            <div class="ct"><svg class="chev"><use href="#chev"/></svg><i class="hdots"></i><svg class="gear"><use href="#gear"/></svg><span class="gl">CT-110</span></div>
            <div class="child"><i class="rail2"></i><i class="twig2"></i><svg class="gear"><use href="#gear"/></svg><span class="clbl">(底)CT-110-1</span></div>
            <div class="ct"><svg class="chev"><use href="#chev"/></svg><i class="hdots"></i><svg class="gear"><use href="#gear"/></svg><span class="gl">CT-111</span></div>
            <div class="child"><i class="rail2"></i><i class="twig2"></i><svg class="gear"><use href="#gear"/></svg><span class="clbl">(底)CT-111-1</span></div>
            <div class="ct"><svg class="chev"><use href="#chev"/></svg><i class="hdots"></i><svg class="gear"><use href="#gear"/></svg><span class="gl">CT-112</span></div>
            <div class="child"><i class="rail2"></i><i class="twig2"></i><svg class="gear"><use href="#gear"/></svg><span class="clbl">(底)CT-112-1</span></div>
            <div class="ct"><svg class="chev"><use href="#chev"/></svg><i class="hdots"></i><svg class="gear"><use href="#gear"/></svg><span class="gl">CT-113</span></div>
            <div class="child"><i class="rail2"></i><i class="twig2"></i><svg class="gear"><use href="#gear"/></svg><span class="clbl">(底)CT-113-1</span></div>
            <div class="ct"><svg class="chev"><use href="#chev"/></svg><i class="hdots"></i><svg class="gear"><use href="#gear"/></svg><span class="gl">CT-114</span></div>
            <div class="child"><i class="rail2"></i><i class="twig2"></i><svg class="gear"><use href="#gear"/></svg><span class="clbl">(底)CT-114-1</span></div>
            <div class="ct"><svg class="chev"><use href="#chev"/></svg><i class="hdots"></i><svg class="gear"><use href="#gear"/></svg><span class="gl">CT-115</span></div>
            <div class="child"><i class="rail2"></i><i class="twig2 twig2-tall"></i><svg class="gear"><use href="#gear"/></svg><span class="clbl">(顶)CT-115-2</span></div>
            <div class="child"><i class="rail2"></i><i class="twig2"></i><svg class="gear"><use href="#gear"/></svg><span class="clbl">(底)CT-115-1</span></div>
            <div class="ct"><svg class="chev"><use href="#chev"/></svg><i class="hdots"></i><svg class="gear"><use href="#gear"/></svg><span class="gl">CT-116</span></div>
            <div class="child"><i class="rail2"></i><i class="twig2"></i><svg class="gear"><use href="#gear"/></svg><span class="clbl">(底)CT-116-1</span></div>
            <div class="ct"><svg class="chev"><use href="#chev"/></svg><i class="hdots"></i><svg class="gear"><use href="#gear"/></svg><span class="gl">CT-117</span></div>
            <div class="child"><i class="rail2"></i><i class="twig2"></i><svg class="gear"><use href="#gear"/></svg><span class="clbl">(底)CT-117-1</span></div>
            <div class="ct"><svg class="chev"><use href="#chev"/></svg><i class="hdots"></i><svg class="gear"><use href="#gear"/></svg><span class="gl">CT-118</span></div>
            <div class="child child-sel"><i class="rail2"></i><i class="twig2"></i><span class="sel-wrap"><svg class="gear"><use href="#gear"/></svg><span class="clbl">(底)CT-118-1</span></span></div>
            <div class="ct"><svg class="chev"><use href="#chev"/></svg><i class="hdots"></i><svg class="gear"><use href="#gear"/></svg><span class="gl">CT-119</span></div>
            <div class="child"><i class="rail2"></i><i class="twig2"></i><svg class="gear"><use href="#gear"/></svg><span class="clbl">(底)CT-119-1</span></div>
            <div class="ct"><svg class="chev"><use href="#chev"/></svg><i class="hdots"></i><svg class="gear"><use href="#gear"/></svg><span class="gl">CT-120</span></div>
            <div class="child"><i class="rail2"></i><i class="twig2"></i><svg class="gear"><use href="#gear"/></svg><span class="clbl">(底)CT-120-1</span></div>
            <div class="ct"><svg class="chev"><use href="#chev"/></svg><i class="hdots"></i><svg class="gear"><use href="#gear"/></svg><span class="gl">CT-121</span></div>
            <div class="child"><i class="rail2"></i><i class="twig2"></i><svg class="gear"><use href="#gear"/></svg><span class="clbl">(底)CT-121-1</span></div>
            <div class="ct"><svg class="chev"><use href="#chev"/></svg><i class="hdots"></i><svg class="gear"><use href="#gear"/></svg><span class="gl">CT-122</span></div>
            <div class="child"><i class="rail2"></i><i class="twig2"></i><svg class="gear"><use href="#gear"/></svg><span class="clbl">(底)CT-122-1</span></div>
            <div class="ct"><svg class="chev"><use href="#chev"/></svg><i class="hdots"></i><svg class="gear"><use href="#gear"/></svg><span class="gl">CT-123</span></div>
            <div class="child"><i class="rail2"></i><i class="twig2"></i><svg class="gear"><use href="#gear"/></svg><span class="clbl">(底)CT-123-1</span></div>
          </div>
          <div class="vscroll vs-comp"><svg class="sb-up"><use href="#chev"/></svg><span class="vs-space vs-comp-space"></span><span class="thumb vs-comp-thumb"></span><svg class="sb-dn"><use href="#chev"/></svg></div>
        </div>
      </div>
      <div class="pane">
        <div class="tabs"><span class="tab">属性编辑</span></div>
        <table class="props">
          <thead><tr><th class="c-n"></th><th class="c-k">属性名称</th><th class="c-v">属性值</th><th class="c-x">附</th></tr></thead>
          <tbody>
            <tr class="row-sel"><td class="c-n">1</td><td class="c-k">名称</td><td class="c-v">CT-118-1</td><td class="c-x"></td></tr>
            <tr><td class="c-n">2</td><td class="c-k">截面形状</td><td class="c-v">阶式三桩台一</td><td class="c-x"></td></tr>
            <tr class="row-dim"><td class="c-n">3</td><td class="c-k">长度(mm)</td><td class="c-v">5608</td><td class="c-x"></td></tr>
            <tr class="row-dim"><td class="c-n">4</td><td class="c-k">宽度(mm)</td><td class="c-v">4858</td><td class="c-x"></td></tr>
            <tr class="row-dim"><td class="c-n">5</td><td class="c-k">高度(mm)</td><td class="c-v">500</td><td class="c-x"></td></tr>
            <tr><td class="c-n">6</td><td class="c-k">相对底标高(m)</td><td class="c-v">(0)</td><td class="c-x"></td></tr>
            <tr><td class="c-n">7</td><td class="c-k link">其它钢筋</td><td class="c-v">1</td><td class="c-x"></td></tr>
            <tr><td class="c-n">8</td><td class="c-k">承台单边加强筋</td><td class="c-v"></td><td class="c-x"></td></tr>
            <tr><td class="c-n">9</td><td class="c-k">加强筋起步(mm)</td><td class="c-v">40</td><td class="c-x"></td></tr>
            <tr><td class="c-n">10</td><td class="c-k">备注</td><td class="c-v"></td><td class="c-x"></td></tr>
            <tr class="row-g"><td class="c-n">11</td><td class="c-k c-exp"><i class="plusbox">+</i>锚固搭接</td><td class="c-v"></td><td class="c-x"></td></tr>
          </tbody>
        </table>
      </div>
    </div>
  </section>
</main>

<footer class="status">
  <span class="st st-1"></span><span class="st st-2">层高:2.15m</span><span class="st st-3">底标高:-2.2m</span><span class="st st-4">0</span><span class="st st-5">名称在当前层当前构件类型下不允许重名</span><span class="st st-6">373.3 FPS</span>
</footer>

<div class="taskbar">
  <span class="tb-start"><svg class="ico"><use href="#win"/></svg></span>
  <span class="tb-search"><i class="cortana"></i><span class="tb-ph">在这里输入你要搜索的内容</span><svg class="tb-mic"><use href="#mict"/></svg></span>
  <span class="tb-app tb-view"><svg class="t20"><use href="#tview"/></svg></span>
  <span class="tb-app"><svg class="t22"><use href="#fan"/></svg></span>
  <span class="tb-app"><svg class="t22"><use href="#ie"/></svg></span>
  <span class="tb-app tb-swirl"><svg class="t22"><use href="#swirl"/></svg><svg class="bellg"><use href="#bellg"/></svg></span>
  <span class="tb-app tb-active"><svg class="t24"><use href="#logo"/></svg></span>
  <span class="tb-strip"><svg class="strip-up"><use href="#chev"/></svg><svg class="strip-dn"><use href="#chev"/></svg></span>
  <span class="tb-link">链接</span>
  <span class="tb-cpu"><span>22%</span><span>CPU使用</span></span>
  <span class="tb-caret"></span>
  <svg class="tray"><use href="#ime"/></svg>
  <svg class="tray-14"><use href="#tbell"/></svg>
  <svg class="tray-18"><use href="#batt"/></svg>
  <svg class="tray-16"><use href="#wifi"/></svg>
  <svg class="tray-16 tray-vol"><use href="#vol"/></svg>
  <svg class="tray-23"><use href="#tkbd"/></svg>
  <span class="tb-zh">中</span>
  <svg class="tray-s"><use href="#sogou"/></svg>
  <span class="tb-clock"><span>15:58</span><span>2018/8/10</span></span>
  <span class="tb-note"><svg class="t-note"><use href="#note"/></svg><i class="note-badge">1</i></span>
</div>

<div class="dialog">
  <div class="dlg-title">参数图</div>
  <div class="dlg-radios">
    <span class="radio radio-on"></span><span class="radio-l">角度放坡形式</span><span class="dlg-sep"></span>
    <span class="radio radio-2"></span><span class="radio-l">底宽放坡形式</span>
  </div>
  <svg class="cad" viewBox="715 146 620 504" xmlns="http://www.w3.org/2000/svg">
    <defs><clipPath id="hex"><polygon points="944,231 1029,231 1170,499 1130,581 843,581 804,499"/></clipPath></defs>
    <g clip-path="url(#hex)">
      <path class="g-hatch" d="M980.500 231L798.500 581M992 231L810 581M1003.500 231L821.500 581M1015 231L833 581M1026.500 231L844.500 581M1038 231L856 581M1049.500 231L867.500 581M1061 231L879 581M1072.500 231L890.500 581"/>
      <path class="g-hatch" d="M996.500 231L1178.500 581M985 231L1167 581M973.500 231L1155.500 581M962 231L1144 581M950.500 231L1132.500 581M939 231L1121 581M927.500 231L1109.500 581M916 231L1098 581M904.500 231L1086.500 581"/>
      <path class="g-mag" d="M800 458.500H1175M800 466.500H1175M800 474.500H1175M800 483.500H1175M800 491.500H1175M800 499.500H1175M800 507.500H1175M800 515.500H1175M800 524.500H1175M800 532.500H1175M800 537.500H1175"/>
      <path class="g-yel" d="M800 409.500H1175M800 431.500H1175"/>
    </g>
    <path class="g-w" d="M944 231.500H1029L1170 499L1130 581.500H843L804 499Z"/>
    <circle class="g-circ" cx="988" cy="307" r="42"/>
    <circle class="g-circ" cx="889" cy="499" r="42"/>
    <circle class="g-circ" cx="1084" cy="499" r="42"/>
    <path class="g-w" d="M985.500 170V231M966 181.500H1004M966 187.500H1004"/>
    <path class="g-cy" d="M1055.500 280V581M1074.500 317V581"/>
    <path class="g-w" d="M857 327L920 359Q985 412 1048 366L1100 335"/>
    <path class="g-tick" d="M920 359Q985 412 1048 366"/>
    <rect class="g-red" x="954" y="393" width="58" height="44"/>
    <rect class="g-red" x="1037" y="351" width="60" height="47"/>
    <path class="g-w" d="M969.500 444V585M969.500 605V633.500H1007M985.500 582V588M985.500 605V650"/>
    <path class="g-w" d="M964 458L975 450M964 466L975 458M964 475L975 467M964 483L975 475M964 491L975 483M964 499L975 491M964 507L975 499M964 515L975 507M964 524L975 516M964 532L975 524M964 540L975 532"/>
    <path class="g-w" d="M804.500 587V601M843.500 587V601M889.500 587V601M1084.500 587V601M1130.500 587V601M1170.500 587V601M804 596.500H966M1009 596.500H1170M802 600L807 593M841 600L846 593M887 600L892 593M1082 600L1087 593M1128 600L1133 593M1168 600L1173 593"/>
    <path class="g-w" d="M1186.500 230V247M1186.500 290V418M1186.500 460V520M1186.500 558V581M1177 231.500H1196M1177 307.500H1196M1177 499.500H1196M1177 581.500H1196M1183 310L1190 304M1183 502L1190 496M1183 584L1190 578"/>
    <path class="g-w" d="M1107.500 393.500H1152M1107.500 393.500V434M1102 409.500H1112M1102 432.500H1112M1103 413L1112 405M1103 436L1112 428"/>
    <path class="g-w" d="M1005 570.500H1079M1049 574L1058 566M1068 574L1077 566"/>
    <path class="g-w" d="M755 499.500H799M1199 499.500H1243"/>
    <path class="g-w" d="M1289.500 359V401M1289.500 437V472M1283 359.500H1301M1283 472.500H1301M1323.500 400V412M1323.500 432V444M1317 400.500H1335M1317 444.500H1335M1333.500 359V472M1333.500 359.500H1335M1333.500 472.500H1335"/>
    <text class="t-one" x="777" y="495" text-anchor="middle">1</text>
    <text class="t-one" x="1221" y="495" text-anchor="middle">1</text>
    <text class="t-w" transform="translate(846,288) rotate(31)">桩间连接筋</text>
    <text class="t-g16" transform="translate(832,307) rotate(28)">6C22</text>
    <text class="t-ws" transform="translate(818,328) rotate(31)">布置范围</text>
    <text class="t-gs" transform="translate(810,354) rotate(20)">650</text>
    <text class="t-w" transform="translate(1081,314) rotate(-25)">桩间连接筋</text>
    <text class="t-g16" transform="translate(1092,332) rotate(-27)">6C22</text>
    <text class="t-ws" transform="translate(1100,350) rotate(-27)">布置范围</text>
    <text class="t-g16" transform="translate(1112,368) rotate(-27)">650</text>
    <text class="t-w" x="1112" y="385">横向分布筋</text>
    <text class="t-s" x="1125" y="407">XJ</text>
    <text class="t-w" x="975" y="556">纵向分布筋</text>
    <text class="t-s" x="981" y="578">YJ</text>
    <text class="t-g" x="967" y="602">3300</text>
    <text class="t-g" x="810" y="616">577</text>
    <text class="t-g" x="852" y="616">577</text>
    <text class="t-w" x="1008" y="629">桩间连接筋</text>
    <text class="t-g" x="1103" y="629">6C22</text>
    <text class="t-w" x="1008" y="652">布置范围</text>
    <text class="t-g" x="1085" y="652">650</text>
    <text class="t-g" transform="translate(1192,288) rotate(-90)">1000</text>
    <text class="t-g" transform="translate(1192,459) rotate(-90)">2858</text>
    <text class="t-g" transform="translate(1192,558) rotate(-90)">1000</text>
    <text class="t-g" transform="translate(1295,433) rotate(-90)">500</text>
    <text class="t-g" transform="translate(1318,436) rotate(-90)">300</text>
    <text class="t-w" transform="translate(1328,578) rotate(-90)">桩间连接筋弯折</text>
  </svg>
  <div class="dlg-foot"><button class="dlg-btn">配筋形式</button></div>
</div>
</body>
</html>
```
FILE: styles.css
```css
* { box-sizing: border-box; }
html, body { margin: 0; padding: 0; }
body {
  width: 1366px; height: 768px; overflow: hidden; position: relative;
  background: #f0f0f0; color: #1a1a1a;
  font: 12px/16px "Noto Sans CJK SC", "Liberation Sans", sans-serif;
}
.defs { position: absolute; }
svg { display: block; flex: none; }
i { font-style: normal; }
.ico { width: 16px; height: 16px; }
.ar { width: 8px; height: 4px; }
.nowrap { white-space: nowrap; }

.m1 { margin-left: 1px; } .m2 { margin-left: 2px; } .m3 { margin-left: 3px; }
.m4 { margin-left: 4px; } .m5 { margin-left: 5px; } .m6 { margin-left: 6px; }
.m7 { margin-left: 7px; } .m8 { margin-left: 8px; } .m10 { margin-left: 10px; }
.m11 { margin-left: 11px; } .m19 { margin-left: 19px; } .m31 { margin-left: 31px; }
.m39 { margin-left: 39px; }

.titlebar { height: 24px; background: #fff; display: flex; align-items: center; color: #666; font-size: 13px; }
.ico-logo { margin-left: 4px; }
.title-text { margin-left: 4px; font-size: 12.500px; white-space: nowrap; flex: 1; }
.winbtn { flex: none; }
.win-min { width: 11px; height: 1px; background: #777; }
.win-max { width: 9px; height: 9px; border: 1px solid #777; margin-left: 34px; margin-top: 2px; position: relative; }
.win-max::before { content: ""; position: absolute; left: 1px; top: -3px; width: 8px; height: 8px; border: 1px solid #777; border-width: 1px 1px 0 0; }
.win-close { margin-left: 34px; margin-right: 19px; width: 13px; color: #777; font-size: 13px; }

.menubar { height: 29px; background: #f8f8f8; display: flex; align-items: center; padding-left: 7px; gap: 10.600px; white-space: nowrap; position: relative; }
.mi { flex: none; }
.mi-ico { display: flex; align-items: center; gap: 3px; }
.mi-new { margin-left: -4px; }
.mi-ico .ar { margin-left: 2px; }
.mi-gx { margin-left: -5px; }
.acct { position: absolute; left: 1127px; top: 0; height: 29px; width: 239px; display: flex; align-items: center; padding-left: 4px; background: #f0f0f0; }
.phone { margin-left: 4px; }
.chevs { flex: none; width: 10px; font-weight: 700; font-size: 13px; line-height: 12px; align-self: flex-start; margin-top: 4px; }
.chevs-a { margin-left: auto; margin-right: 3px; }

.sogou { position: absolute; left: 921px; top: 27px; height: 27px; display: flex; align-items: flex-end; }
.sg-logo { width: 25px; height: 26px; position: relative; z-index: 1; }
.sg-bar { width: 185px; height: 23px; margin-left: -6px; background: #fff; border: 1px solid #c6d8ea; display: flex; align-items: center; padding-left: 12px; }
.sg-en { color: #1f78cc; font-size: 14px; }
.sg-dot { color: #1f78cc; width: 14px; margin-left: 8px; font-size: 14px; margin-top: -8px; }
.sg-i { margin-left: 6px; }

.badge68 { position: absolute; left: 699px; top: -29px; width: 46px; height: 46px; border-radius: 50%; background: linear-gradient(#4fc860, #22a83a); box-shadow: 0 2px 2px 1px #9a9a9a; display: flex; align-items: flex-end; justify-content: center; color: #fff; font-weight: 700; font-size: 11px; padding-bottom: 2px; }

.toolbar { height: 28px; margin-bottom: 2px; background: #f0f0f0; display: flex; align-items: center; white-space: nowrap; }
.sep { flex: none; width: 1px; height: 22px; background: #b4b4b4; }
.dim { color: #8a8a8a; }
.sigma { font-size: 14px; width: 12px; }
.combo2d { flex: none; width: 62px; height: 24px; border: 1px solid #707070; display: flex; align-items: center; padding-left: 3px; }
.combo2d .ar { margin-left: 6px; }

.workspace { height: 623px; display: flex; }
.nav { width: 166px; flex: none; padding: 1px 2px 0 0; display: flex; flex-direction: column; }
.nav-head { height: 15px; line-height: 13px; display: flex; align-items: center; background: #e8e8e8; border: 1px solid #b8b8b8; border-left: 0; white-space: nowrap; }
.nav-t { flex: none; }
.pin { width: 10px; height: 12px; margin-left: 74px; }
.nav-x { margin-left: 6px; font-size: 13px; color: #333; flex: none; }
.navbtn { display: block; width: 100%; height: 22px; margin: 1px 0 0; padding: 0; background: #f0f0f0; border: 1px solid #c4c4c4; border-left: 0; font: inherit; color: #1a1a1a; }
.navbtn-b { margin-top: 1px; }
.nav-tools { height: 27px; display: flex; align-items: center; padding-left: 7px; gap: 7px; }
.tool17 { width: 17px; height: 16px; }
.nav-tree { height: 488px; margin-left: 2px; border: 1px solid #8c8c8c; border-width: 1px 2px 2px 1px; display: flex; flex-direction: column; background: #f0f0f0; }
.nav-scroll-area { flex: 1; display: flex; min-height: 0; }
.nav-list { width: 143px; background: #fff; padding-top: 1px; position: relative; }
.leaf, .grp { height: 16px; display: flex; align-items: center; white-space: nowrap; font-feature-settings: "hwid"; position: relative; }
.leaf { padding-left: 12px; }
.rail { width: 1px; height: 16px; border-left: 1px dotted #777; flex: none; }
.rail-none { border-left-color: transparent; }
.twig { flex: none; width: 12px; height: 16px; margin-left: 18px; border-left: 1px dotted #777; position: relative; }
.twig::after { content: ""; position: absolute; left: 0; top: 8px; width: 10px; border-top: 1px dotted #777; }
.tw-last { height: 9px; align-self: flex-start; }
.lbl { margin-left: 4px; }
.leaf-sel::before { content: ""; position: absolute; left: 41px; top: 0; width: 81px; height: 16px; background: #d6d6d6; }
.leaf-sel > * { position: relative; }
.leaf-sel .twig { position: relative; }
.colm { width: 14px; height: 14px; margin-left: 1px; }
.grp { padding-left: 8px; }
.chev { width: 10px; height: 8px; flex: none; }
.hdots { flex: none; width: 8px; border-top: 1px dotted #777; margin: 0 0 0 1px; }
.grp .ico { height: 14px; margin-right: 0; }
.grp-l { margin-left: 4px; }

.vscroll { display: flex; flex-direction: column; align-items: center; flex: none; width: 16px; background: #f0f0f0; }
.vs-nav { width: 16px; }
.sb-up { width: 10px; height: 8px; transform: rotate(180deg); margin-top: 6px; }
.sb-dn { width: 10px; height: 8px; margin-top: auto; margin-bottom: 6px; }
.vs-space { flex: none; }
.vs-nav-space { height: 201px; }
.thumb { flex: none; width: 15px; background: #c8c8c8; }
.vs-nav-thumb { height: 232px; }
.vs-comp-space { height: 453px; }
.vs-comp-thumb { height: 72px; }
.hscroll { height: 17px; display: flex; align-items: center; background: #f0f0f0; padding-left: 7px; }
.sb-l { width: 10px; height: 8px; transform: rotate(90deg); }
.sb-r { width: 10px; height: 8px; transform: rotate(-90deg); margin-left: 8px; }
.hthumb { width: 102px; height: 15px; background: #c8c8c8; margin-left: 4px; }

.center { flex: 1; min-width: 0; display: flex; flex-direction: column; padding-left: 4px; }
.toolbar2 { height: 29px; background: #f0f0f0; display: flex; align-items: center; white-space: nowrap; flex: none; }
.floorbox { flex: none; width: 62px; height: 24px; background: #fff; display: flex; align-items: center; padding-left: 4px; }
.floorbox .ar { margin-left: 13px; }
.center-body { flex: 1; display: flex; min-height: 0; }
.comp { width: 190px; flex: none; padding-left: 2px; display: flex; flex-direction: column; }
.search { flex: none; height: 30px; display: flex; padding: 5px 0 0 1px; }
.search-input { width: 156px; height: 25px; border: 1px solid #6e6e6e; background: #fff; color: #777; padding: 3px 0 0 3px; font-size: 12px; }
.search-btn { flex: 1; width: 23px; display: flex; align-items: center; justify-content: center; background: #fff; height: 24px; margin-right: 6px; }
.comp-box { flex: 1; width: 183px; display: flex; background: #fff; border: 1px solid #8c8c8c; border-width: 1px 2px 2px 1px; min-height: 0; }
.comp-list { width: 163px; flex: none; padding-top: 1px; overflow: hidden; }
.ct, .child { height: 16px; display: flex; align-items: center; white-space: nowrap; font-feature-settings: "hwid"; }
.ct { padding-left: 24px; }
.ct .gear, .child .gear { width: 12px; height: 12px; flex: none; }
.gl { margin-left: 7px; }
.child { padding-left: 30px; }
.rail2 { width: 1px; height: 16px; flex: none; border-left: 1px dotted #777; }
.twig2 { flex: none; width: 11px; height: 9px; margin-left: 18px; align-self: flex-start; border-left: 1px dotted #777; border-bottom: 1px dotted #777; }
.twig2-tall { height: 16px; border-bottom: 0; position: relative; }
.twig2-tall::after { content: ""; position: absolute; left: 0; top: 8px; width: 10px; border-top: 1px dotted #777; }
.clbl { margin-left: 9px; }
.sel-wrap { display: flex; align-items: center; height: 16px; background: #316ac5; width: 98px; margin-left: -2px; padding-left: 2px; }
.vs-comp { height: 100%; }

.pane { flex: 1; min-width: 0; background: #fff; border-left: 2px solid #f0f0f0; margin-right: 7px; margin-bottom: 2px; border-right: 1px solid #c8c8c8; border-bottom: 1px solid #c8c8c8; }
.tabs { height: 21px; border-bottom: 1px solid #c8c8c8; background: #fff; }
.tab { display: inline-block; width: 59px; height: 21px; padding: 3px 0 0 3px; background: #fff; border: 1px solid #c8c8c8; border-bottom: 0; }
.props { border-collapse: collapse; table-layout: fixed; width: 345px; margin: 4px 0 0 2px; font-feature-settings: "hwid"; }
.props th, .props td { padding: 0; border: 1px solid #c4c4c4; height: 19px; font-weight: 400; white-space: nowrap; overflow: hidden; }
.props th { height: 23px; background: linear-gradient(#fafafa, #e8e8e8); text-align: center; }
.c-n { width: 21px; text-align: center; background: #f2f2f2; }
.c-k { width: 190px; padding-left: 19px !important; }
.props th.c-k { padding-left: 0 !important; }
.c-v { width: 127px; padding-left: 1px !important; }
.c-x { width: 7px; }
.props th.c-v { background: linear-gradient(#fadfa6, #f2c36c); color: #800080; }
.row-sel .c-n { background: #fbd79a; color: #7a4a10; }
.row-sel .c-k { background: #0078d7; color: #fff; }
.row-sel .c-v { background: #d9eaf8; }
.row-dim .c-k, .row-dim .c-v, .row-g .c-k { color: #808080; }
.link { color: #0000e0; }
.c-exp { padding-left: 1px !important; }
.plusbox { display: inline-block; width: 13px; height: 13px; line-height: 10px; text-align: center; border: 1px solid #888; color: #222; margin-right: 5px; vertical-align: -2px; font-size: 13px; }

.status { height: 22px; display: flex; gap: 2px; padding-top: 1px; font-feature-settings: "hwid"; }
.st { flex: none; height: 20px; border: 1px solid #dcdcdc; background: #f2f2f2; padding-left: 1px; line-height: 20px; overflow: hidden; white-space: nowrap; }
.st-1 { width: 148px; } .st-2 { width: 78px; } .st-3 { width: 98px; } .st-4 { width: 48px; }
.st-5 { width: 914px; } .st-6 { width: 70px; }

.taskbar { height: 40px; background: #000e14; display: flex; align-items: center; color: #fff; white-space: nowrap; }
.tb-start { width: 48px; height: 40px; background: #000; display: flex; align-items: center; justify-content: center; }
.tb-search { width: 344px; height: 40px; background: #333; display: flex; align-items: center; padding-left: 12px; }
.cortana { width: 18px; height: 18px; border: 3px solid #dedede; border-radius: 50%; flex: none; }
.tb-ph { margin-left: 6px; font-size: 14px; color: #8c8c8c; width: 276px; }
.tb-mic { width: 16px; height: 20px; margin-left: 3px; }
.tb-app { flex: none; width: 52px; height: 40px; display: flex; align-items: center; justify-content: center; position: relative; }
.tb-view { width: 48px; }
.t20 { width: 20px; height: 18px; } .t22 { width: 22px; height: 24px; } .t24 { width: 24px; height: 24px; }
.bellg { position: absolute; left: 29px; top: 4px; width: 14px; height: 16px; }
.tb-active { width: 47px; margin-left: 1px; background: #2f3c44; border-bottom: 3px solid #76b9ed; }
.tb-strip { flex: none; width: 16px; height: 40px; margin-left: 229px; background: #f0f0f0; display: flex; flex-direction: column; align-items: center; justify-content: space-around; padding: 4px 0; }
.strip-up { width: 10px; height: 8px; transform: rotate(180deg); }
.strip-dn { width: 10px; height: 8px; }
.tb-link { margin-left: 10px; width: 26px; color: #e8e8e8; }
.tb-cpu { display: flex; flex-direction: column; align-items: center; width: 60px; margin-left: 13px; line-height: 20px; }
.tb-caret { width: 9px; height: 9px; border-left: 1.500px solid #fff; border-top: 1.500px solid #fff; transform: rotate(45deg); margin: 5px 0 0 15px; }
.tray { width: 16px; height: 20px; margin-left: 11px; }
.tray-14 { width: 14px; height: 16px; margin-left: 10px; }
.tray-18 { width: 18px; height: 14px; margin-left: 8px; }
.tray-16 { width: 16px; height: 14px; margin-left: 9px; }
.tray-vol { margin-left: 6px; }
.tray-23 { width: 23px; height: 15px; margin-left: 8px; }
.tb-zh { margin-left: 10px; font-size: 14px; }
.tray-s { width: 16px; height: 20px; margin-left: 12px; }
.tb-clock { display: flex; flex-direction: column; align-items: center; width: 62px; margin-left: 16px; line-height: 20px; }
.tb-note { position: relative; margin-left: 18px; width: 20px; height: 26px; }
.t-note { width: 16px; height: 18px; margin-top: 2px; }
.note-badge { position: absolute; left: 7px; top: 10px; width: 17px; height: 17px; border-radius: 50%; background: #3b3b3b; border: 1px solid #777; text-align: center; line-height: 15px; font-weight: 700; font-size: 11px; }

.dialog { position: absolute; left: 707px; top: 83px; width: 637px; height: 619px; background: linear-gradient(#98b4d2, #b9d1e8 40px); border: 1px solid #111; border-bottom-color: #14708f; border-top: 0; padding: 0 8px 0 7px; display: flex; flex-direction: column; }
.dlg-title { height: 29px; padding-top: 9px; line-height: 16px; flex: none; }
.dlg-radios { height: 34px; background: #f0f0f0; display: flex; align-items: center; padding-left: 97px; flex: none; border-bottom: 1px solid #999; }
.radio { width: 13px; height: 13px; border-radius: 50%; border: 1px solid #333; background: #fff; flex: none; position: relative; }
.radio-on::after { content: ""; position: absolute; left: 2px; top: 2px; width: 7px; height: 7px; border-radius: 50%; background: #333; }
.radio-l { margin-left: 2px; }
.dlg-sep { width: 1px; height: 16px; background: #888; margin-left: 10px; }
.radio-2 { margin-left: 157px; }
.cad { width: 620px; height: 504px; background: #000; flex: none; display: block; }
.dlg-foot { height: 40px; background: #f0f0f0; flex: none; display: flex; align-items: flex-start; justify-content: flex-end; padding: 11px 26px 0 0; border-bottom: 1px solid #aaa; }
.dlg-btn { width: 72px; height: 23px; padding: 0; background: #e1e1e1; border: 1px solid #adadad; font: inherit; color: #1a1a1a; }

.g-hatch { fill: none; stroke: #00ff00; stroke-width: 1; shape-rendering: crispEdges; }
.g-mag { fill: none; stroke: #f0f; stroke-width: 1; shape-rendering: crispEdges; }
.g-yel { fill: none; stroke: #ff0; stroke-width: 1; shape-rendering: crispEdges; }
.g-w { fill: none; stroke: #fff; stroke-width: 1; shape-rendering: crispEdges; }
.g-circ { fill: none; stroke: #fff; stroke-width: 1; stroke-dasharray: 10 1.500; shape-rendering: crispEdges; }
.g-cy { fill: none; stroke: #0ff; stroke-width: 1; shape-rendering: crispEdges; }
.g-tick { fill: none; stroke: #fff; stroke-width: 6; stroke-dasharray: 1 8; shape-rendering: crispEdges; }
.g-red { fill: none; stroke: #f00; stroke-width: 3; shape-rendering: crispEdges; }
.t-one { fill: #eaf3ff; font: 44px "Liberation Serif", serif; }
.t-w { fill: #e4edff; font: 17px "Noto Sans CJK SC", sans-serif; letter-spacing: 2px; font-weight: 300; }
.t-ws { fill: #e4edff; font: 16px "Noto Sans CJK SC", sans-serif; letter-spacing: 1.500px; font-weight: 300; }
.t-g { fill: #00d000; font: 17px "Liberation Sans", sans-serif; letter-spacing: .5px; }
.t-g16 { fill: #00d000; font: 16px "Liberation Sans", sans-serif; }
.t-gs { fill: #00d000; font: 16px "Liberation Sans", sans-serif; letter-spacing: 1px; }
.t-s { fill: #00d000; font: 18px "Liberation Serif", serif; letter-spacing: 1px; }
```
